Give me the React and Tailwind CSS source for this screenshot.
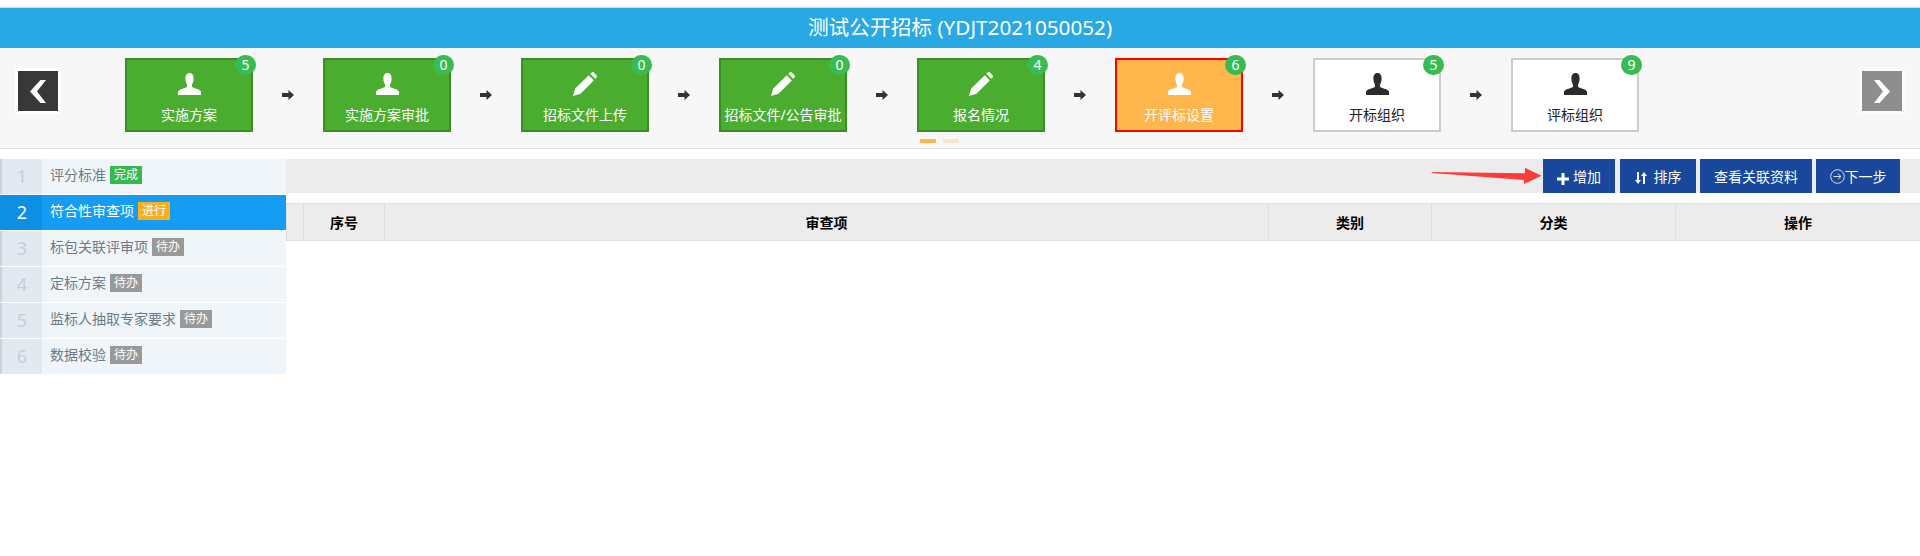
const steps = [
  { label: '实施方案', count: 5, icon: 'user', state: 'done' },
  { label: '实施方案审批', count: 0, icon: 'user', state: 'done' },
  { label: '招标文件上传', count: 0, icon: 'pencil', state: 'done' },
  { label: '招标文件/公告审批', count: 0, icon: 'pencil', state: 'done' },
  { label: '报名情况', count: 4, icon: 'pencil', state: 'done' },
  { label: '开评标设置', count: 6, icon: 'user', state: 'active' },
  { label: '开标组织', count: 5, icon: 'user', state: 'todo' },
  { label: '评标组织', count: 9, icon: 'user', state: 'todo' },
];

const menu = [
  { label: '评分标准', tag: '完成', tagClass: 'bg-[#39b84e]' },
  { label: '符合性审查项', tag: '进行', tagClass: 'bg-[#fdb01e]', active: true },
  { label: '标包关联评审项', tag: '待办', tagClass: 'bg-[#999999]' },
  { label: '定标方案', tag: '待办', tagClass: 'bg-[#999999]' },
  { label: '监标人抽取专家要求', tag: '待办', tagClass: 'bg-[#999999]' },
  { label: '数据校验', tag: '待办', tagClass: 'bg-[#999999]' },
];

const columns = [
  { label: '', width: 'w-[17px]' },
  { label: '序号', width: 'w-[81px]' },
  { label: '审查项', width: 'w-[884px]' },
  { label: '类别', width: 'w-[163px]' },
  { label: '分类', width: 'w-[244px]' },
  { label: '操作', width: 'w-[245px]' },
];

function UserIcon({ className }) {
  return (
    <svg viewBox="0 0 23 22" className={className} fill="currentColor">
      <path d="M11.5 0C14.6 0 15.6 2.5 15.6 5.5C15.6 8 15 10 14 11.5V14C17 15.5 21.500 16 23 18.500V22H0V18.500C1.500 16 6 15.5 9 14V11.500C8 10 7.400 8 7.400 5.500C7.400 2.500 8.400 0 11.500 0Z" />
    </svg>
  );
}

function PencilIcon({ className }) {
  return (
    <svg viewBox="0 0 24 24" className={className} fill="currentColor">
      <path d="M0 24L2.2 16.5L15.8 3.2L20.8 8.5L7.5 21.8Z" />
      <path d="M17.2 1.8L18.8 .4C19.4 -.1 20.2 -.1 20.8 .4L23.6 3.2C24.1 3.8 24.1 4.6 23.6 5.2L22.2 6.8Z" />
    </svg>
  );
}

function StepCard({ step }) {
  const cardClass = {
    done: 'border-[#3a8c24] bg-[#4aad2f] text-white',
    active: 'border-[#ff0000] bg-[#ffb74d] text-white',
    todo: 'border-[#cccccc] bg-white text-[#222222]',
  }[step.state];

  return (
    <div className={`relative flex h-[74px] w-[128px] shrink-0 flex-col items-center border-2 ${cardClass}`}>
      <div className="mt-[12px] flex h-[24px] items-center justify-center">
        {step.icon === 'user' ? (
          <UserIcon className={`h-[22px] w-[23px] ${step.state === 'todo' ? 'text-[#2b2b2b]' : ''}`} />
        ) : (
          <PencilIcon className="h-[24px] w-[24px]" />
        )}
      </div>
      <div className="mt-[9px] whitespace-nowrap text-[14px] leading-[20px]">{step.label}</div>
      <span className="absolute -right-[5px] -top-[5px] flex h-[20px] w-[21px] items-center justify-center rounded-full bg-[#39bb53] text-[14px] leading-none text-white">
        {step.count}
      </span>
    </div>
  );
}

function StepArrow() {
  return (
    <div className="flex h-[74px] w-[70px] shrink-0 items-center justify-center">
      <svg viewBox="0 0 12 10" className="h-[10px] w-[12px] text-[#333333]" fill="currentColor">
        <path d="M0 3H6.500V0L12 5L6.500 10V7H0Z" />
      </svg>
    </div>
  );
}

function NavButton({ dir }) {
  return (
    <button
      className={`mt-[10px] flex h-[46px] w-[46px] shrink-0 items-center justify-center border-[3px] ${
        dir === 'left' ? 'border-white bg-[#383838]' : 'border-[#fbfbfb] bg-[#8e8e8e]'
      }`}
    >
      <svg viewBox="0 0 16 23" className="h-[23px] w-[16px] text-white" fill="currentColor">
        {dir === 'left' ? <path d="M10.5 0H16L7 11.5L16 23H10.5L0 11.5Z" /> : <path d="M5.5 0H0L9 11.5L0 23H5.5L16 11.5Z" />}
      </svg>
    </button>
  );
}

export default function App() {
  return (
    <div className="min-h-screen bg-white pt-[7px] font-['Noto_Sans','Noto_Sans_CJK_SC',sans-serif]">
      {/* 标题 */}
      <div className="flex h-[41px] items-center justify-center border-t border-[#c9dde9] bg-[#29a9e3] text-[20.700px] text-white">
        测试公开招标 (YDJT2021050052)
      </div>

      {/* 流程步骤 */}
      <div className="h-[101px] border-b border-[#e0e0e0] bg-[#f7f7f7] pt-[10px]">
        <div className="flex items-start pl-[15px] pr-[15px]">
          <NavButton dir="left" />
          <div className="ml-[64px] flex">
            {steps.map((step, i) => (
              <div key={step.label} className="flex">
                <StepCard step={step} />
                {i < steps.length - 1 && <StepArrow />}
              </div>
            ))}
          </div>
          <div className="ml-auto">
            <NavButton dir="right" />
          </div>
        </div>
        <div className="ml-[919px] mt-[6px] flex gap-[5px]">
          <span className="h-[6px] w-[18px] border border-[#fafafa] bg-[#ffb74d]" />
          <span className="h-[6px] w-[18px] border border-[#fafafa] bg-[#f6e6cc]" />
        </div>
      </div>

      <div className="mt-[10px] flex items-start">
        {/* 左侧菜单 */}
        <div className="w-[286px] shrink-0">
          {menu.map((item, i) => (
            <div
              key={item.label}
              className={`mb-px flex h-[35px] items-center ${item.active ? 'bg-[#159cf5] text-white' : 'bg-[#f0f5fa] text-[#6b7c88]'}`}
            >
              <div
                className={`flex h-full w-[42px] items-center justify-center border-l-2 text-[18px] ${
                  item.active ? 'border-[#0d90e4] bg-[#0d90e4] text-white' : 'border-[#c5d5e0] bg-[#e2e9f0] text-[#c3d0d9]'
                }`}
              >
                {i + 1}
              </div>
              <div className="ml-[8px] flex items-center gap-[4px] pb-[3px] text-[14px] leading-[18px]">
                <span>{item.label}</span>
                <span className={`flex h-[18px] w-[32px] items-center justify-center text-[12px] text-white ${item.tagClass}`}>
                  {item.tag}
                </span>
              </div>
            </div>
          ))}
        </div>

        {/* 右侧内容 */}
        <div className="min-w-0 flex-1">
          <div className="relative flex h-[34px] justify-end bg-[#ececec] pr-[20px] text-[14px] text-white">
            <svg viewBox="0 0 110 18" className="absolute left-[1146px] top-[8px] h-[18px] w-[110px]">
              <path d="M0 5L93 6.300V.7L109.500 8.700L92 17V13L0 6Z" fill="#ff3b3b" />
            </svg>
            <button className="flex w-[72px] items-center justify-center gap-[4px] bg-[#18479b]">
              <svg viewBox="0 0 12 12" className="mt-[6px] h-[12px] w-[12px]" fill="currentColor">
                <path d="M4.500 0H7.500V4.500H12V7.500H7.500V12H4.500V7.500H0V4.500H4.500Z" />
              </svg>
              增加
            </button>
            <button className="ml-[5px] flex w-[76px] items-center justify-center gap-[7px] bg-[#18479b]">
              <svg viewBox="0 0 12 12" className="mt-[4px] h-[12px] w-[12px]" fill="currentColor">
                <path d="M2 0H4V8H6L3 12L0 8H2Z" />
                <path d="M8 12H10V4H12L9 0L6 4H8Z" />
              </svg>
              排序
            </button>
            <button className="ml-[4px] w-[112px] bg-[#18479b]">查看关联资料</button>
            <button className="ml-[4px] flex w-[84px] items-center justify-center bg-[#18479b]">
              <svg viewBox="0 0 15 15" className="h-[15px] w-[15px]" fill="none" stroke="#d5deee" strokeWidth="1">
                <circle cx="7.500" cy="7.500" r="6.800" />
                <path d="M3.500 7.500H11M8 4.800L11 7.500L8 10.200" />
              </svg>
              下一步
            </button>
          </div>

          <table className="mt-[10px] w-full table-fixed border-collapse">
            <thead>
              <tr className="h-[37px] bg-[#ececec] text-[14px] font-bold text-black">
                {columns.map((col) => (
                  <th key={col.label || 'check'} className={`border border-[#dedede] p-0 text-center ${col.width}`}>
                    {col.label}
                  </th>
                ))}
              </tr>
            </thead>
          </table>
        </div>
      </div>
    </div>
  );
}
